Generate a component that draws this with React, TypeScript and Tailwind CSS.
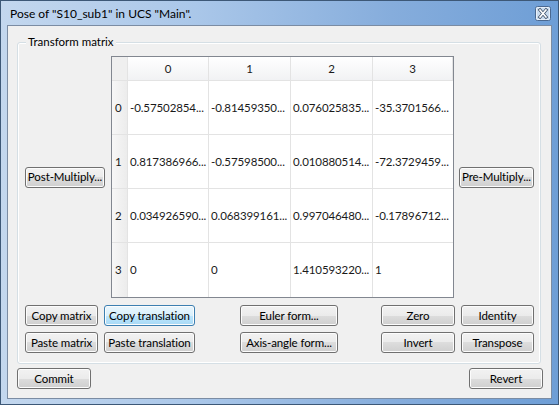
import type { ReactNode } from 'react';

const font = { fontFamily: 'Lato, "Noto Sans", sans-serif' };

const rows = [
  ['-0.57502854...', '-0.81459350...', '0.076025835...', '-35.3701566...'],
  ['0.817386966...', '-0.57598500...', '0.010880514...', '-72.3729459...'],
  ['0.034926590...', '0.068399161...', '0.997046480...', '-0.17896712...'],
  ['0', '0', '1.410593220...', '1'],
];

function Btn({ children, w, focus, className = '' }: { children: ReactNode; w: string; focus?: boolean; className?: string }) {
  const skin = focus
    ? 'border-[#3c7fb1] bg-[linear-gradient(to_bottom,#eaf6fd_0%,#d9f0fc_50%,#bee6fd_50%,#a7d9f5_100%)]'
    : 'border-[#707070] bg-[linear-gradient(to_bottom,#f2f2f2_0%,#ebebeb_50%,#dddddd_50%,#cfcfcf_100%)]';
  return (
    <button
      className={`${w} ${skin} ${className} h-[21px] shrink-0 whitespace-nowrap rounded-[3px] border text-[11.5px] tracking-[-0.1px] leading-none text-black shadow-[inset_0_0_0_1px_#fcfcfc]`}
    >
      {children}
    </button>
  );
}

function CloseIcon() {
  return (
    <svg width="16" height="15" viewBox="0 0 16 15">
      <rect x="0.5" y="0.5" width="15" height="14" rx="2" fill="#c9dbee" stroke="#4a6890" />
      <rect x="1.5" y="1.5" width="13" height="12" rx="1" fill="none" stroke="#e9f1fa" />
      <path d="M5 4 L11 11 M11 4 L5 11" stroke="#3b4d66" strokeWidth="3.2" strokeLinecap="square" />
      <path d="M5 4 L11 11 M11 4 L5 11" stroke="#ffffff" strokeWidth="1.6" strokeLinecap="square" />
    </svg>
  );
}

function Matrix() {
  return (
    <div className="w-[343px] h-[242px] shrink-0 border border-[#828790] bg-white">
      <div className="grid grid-cols-[16px_81px_82px_82px_80px] grid-rows-[24px_54px_54px_54px_54px] text-[11.5px] tracking-[-0.1px] text-[#1a1a1a]">
        <div className="border-b border-r border-[#e3e3e3] bg-[#efefef]" />
        {['0', '1', '2', '3'].map((h) => (
          <div
            key={h}
            className="flex items-center justify-center border-b border-r border-[#e3e3e3] bg-[linear-gradient(to_bottom,#ffffff,#f1f2f4)]"
          >
            {h}
          </div>
        ))}
        {rows.map((r, i) => (
          <>
            <div
              key={`h${i}`}
              className={`flex items-center pl-[3px] border-r border-[#e3e3e3] bg-[linear-gradient(to_right,#f7f7f7,#ececec)] ${i < 3 ? 'border-b' : ''}`}
            >
              {i}
            </div>
            {r.map((v, j) => (
              <div
                key={`${i}-${j}`}
                className={`flex items-center overflow-hidden whitespace-nowrap pl-[2px] border-[#e3e3e3] ${i < 3 ? 'border-b' : ''} ${j < 3 ? 'border-r' : ''}`}
              >
                {v}
              </div>
            ))}
          </>
        ))}
      </div>
    </div>
  );
}

export default function App() {
  return (
    <div
      style={font}
      className="flex h-[405px] w-[559px] flex-col border border-[#3d5877] bg-[linear-gradient(to_right,#c3d7ee_0%,#aac7e9_35%,#86addc_70%,#6e9ed6_100%)] px-[6px] pb-[5px]"
    >
      <div className="flex h-[24px] shrink-0 items-center justify-between pl-[3px] pr-[1px] pt-[1px]">
        <span className="text-[12px] text-black">Pose of "S10_sub1" in UCS "Main".</span>
        <CloseIcon />
      </div>
      <div className="flex flex-1 flex-col border border-[#7b8ca3] bg-[#f0f0f0] px-[9px] pt-[16px] pb-[9px]">
        <div className="relative h-[322px] w-[524px] rounded-[3px] border border-[#d5dfe5] px-[7px] pt-[13px] pb-[10px] shadow-[inset_0_0_0_1px_#ffffff]">
          <span className="absolute -top-[9px] left-[8px] bg-[#f0f0f0] px-[2px] text-[11.5px] leading-[16px] text-black">
            Transform matrix
          </span>
          <div className="flex items-center">
            <Btn w="w-[80px]">Post-Multiply...</Btn>
            <div className="ml-[6px]">
              <Matrix />
            </div>
            <Btn w="w-[75px]" className="ml-[5px]">Pre-Multiply...</Btn>
          </div>
          <div className="mt-[7px] flex flex-col gap-[6px]">
            <div className="flex">
              <Btn w="w-[73px]">Copy matrix</Btn>
              <Btn w="w-[91px]" focus className="ml-[6px]">Copy translation</Btn>
              <Btn w="w-[98px]" className="ml-[45px]">Euler form...</Btn>
              <Btn w="w-[74px]" className="ml-[43px]">Zero</Btn>
              <Btn w="w-[73px]" className="ml-[6px]">Identity</Btn>
            </div>
            <div className="flex">
              <Btn w="w-[73px]">Paste matrix</Btn>
              <Btn w="w-[91px]" className="ml-[6px]">Paste translation</Btn>
              <Btn w="w-[98px]" className="ml-[45px]">Axis-angle form...</Btn>
              <Btn w="w-[74px]" className="ml-[43px]">Invert</Btn>
              <Btn w="w-[73px]" className="ml-[6px]">Transpose</Btn>
            </div>
          </div>
        </div>
        <div className="mt-[4px] flex justify-between">
          <Btn w="w-[74px]">Commit</Btn>
          <Btn w="w-[74px]" className="-mr-[1px]">Revert</Btn>
        </div>
      </div>
    </div>
  );
}
